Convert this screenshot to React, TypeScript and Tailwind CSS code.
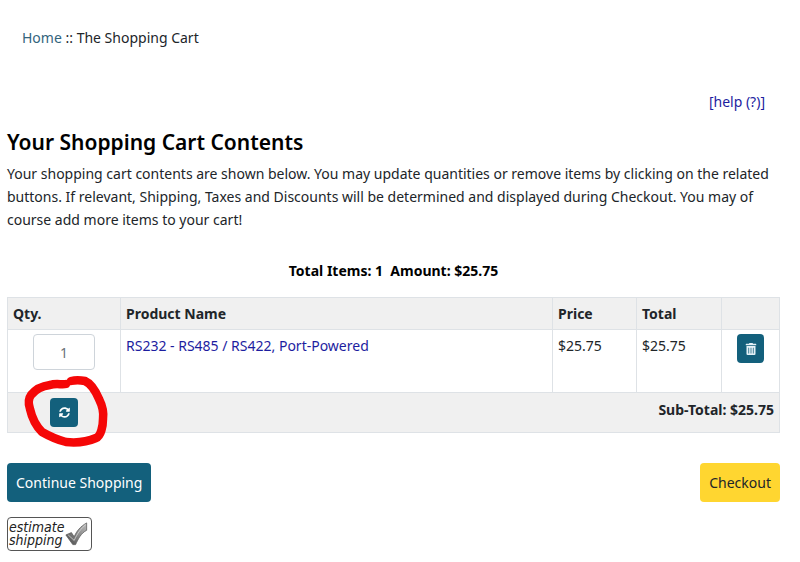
import { FaSyncAlt, FaTrashAlt } from "react-icons/fa";

const cell = "border border-[#dee2e6] px-[5px] align-top";

function EstimateShipping() {
  return (
    <button
      type="button"
      className="flex h-[34px] w-[85px] items-center justify-between rounded-[4px] border border-[#555] bg-white pr-[2px] pl-[1px] text-left text-[14px] text-[#222] italic font-['DejaVu_Sans_Condensed','DejaVu_Sans',sans-serif]"
    >
      <span className="flex w-[54px] flex-col">
        <span className="h-[13px] leading-[13px]">estimate</span>
        <span className="h-[13px] leading-[13px]">shipping</span>
      </span>
      <svg viewBox="0 0 26 26" className="h-[24px] w-[25px] shrink-0" aria-hidden="true">
        <defs>
          <linearGradient id="tick" x1="0" y1="1" x2="1" y2="0">
            <stop offset="0" stopColor="#444" />
            <stop offset="0.5" stopColor="#888" />
            <stop offset="1" stopColor="#bbb" />
          </linearGradient>
        </defs>
        <path d="M1.500 14 L7.500 11.500 L10.500 16 C13 10 17 5 24 1 L24 9 C18 12 15 18 12 24.500 L9 24.500 Z" fill="url(#tick)" stroke="#555" strokeWidth="0.800" />
        <path d="M4 14 L10.500 20 C14 12 18 7 23 3" fill="none" stroke="#ddd" strokeWidth="0.800" />
      </svg>
    </button>
  );
}

export default function App() {
  return (
    <main className="bg-white pr-5 pl-[7px] text-[14px] leading-[22px] text-[#212529] font-['Noto_Sans','Open_Sans',sans-serif]">
      <nav className="px-[15px] pt-[27px]" aria-label="Breadcrumb">
        <a href="#home" className="text-[#33647d]">Home</a> :: The Shopping Cart
      </nav>
      <div className="mt-[42px] pr-[15px] text-right">
        <a href="#help" className="text-[#1d1d9f]">[help (?)]</a>
      </div>
      <h1 className="mt-[15px] text-[21px] leading-[28px] font-semibold text-black">Your Shopping Cart Contents</h1>
      <p className="mt-[6px] leading-[23px]">
        Your shopping cart contents are shown below. You may update quantities or remove items by clicking on the related
        buttons. If relevant, Shipping, Taxes and Discounts will be determined and displayed during Checkout. You may of
        course add more items to your cart!
      </p>
      <p className="mt-[29px] text-center font-bold text-black">Total Items: 1 &nbsp;Amount: $25.75</p>
      <table className="mt-[15px] w-full table-fixed border-collapse">
        <colgroup>
          <col className="w-[113px]" />
          <col />
          <col className="w-[84px]" />
          <col className="w-[85px]" />
          <col className="w-[58px]" />
        </colgroup>
        <thead>
          <tr className="h-[32px] bg-[#f0f0f0] text-left">
            <th scope="col" className={cell + " pt-[5px]"}>Qty.</th>
            <th scope="col" className={cell + " pt-[5px]"}>Product Name</th>
            <th scope="col" className={cell + " pt-[5px]"}>Price</th>
            <th scope="col" className={cell + " pt-[5px]"}>Total</th>
            <td className={cell} />
          </tr>
        </thead>
        <tbody>
          <tr className="h-[63px]">
            <td className={cell + " pt-[4px]"}>
              <input
                type="text"
                aria-label="Quantity"
                defaultValue="1"
                className="mx-auto block h-[36px] w-[62px] rounded-[4px] border border-[#ced4da] text-center text-[#6b7278]"
              />
            </td>
            <td className={cell + " pt-[5px]"}>
              <a href="#product" className="text-[#1d1d9f]">RS232 - RS485 / RS422, Port-Powered</a>
            </td>
            <td className={cell + " pt-[5px]"}>$25.75</td>
            <td className={cell + " pt-[5px]"}>$25.75</td>
            <td className={cell + " pt-[4px]"}>
              <button type="button" aria-label="Delete item" className="mx-auto flex h-[29px] w-[27px] items-center justify-center rounded-[4px] bg-[#13607c] text-[#e4f1f7]">
                <FaTrashAlt size={12} />
              </button>
            </td>
          </tr>
        </tbody>
        <tfoot>
          <tr className="h-[40px] bg-[#f0f0f0]">
            <td className="border border-r-0 border-[#dee2e6] pt-[5px] align-top">
              <div className="relative mx-auto h-[29px] w-[28px]">
                <button type="button" aria-label="Update quantity" className="flex h-[29px] w-[28px] items-center justify-center rounded-[4px] bg-[#13607c] text-white">
                  <FaSyncAlt size={11} />
                </button>
                <svg viewBox="0 0 90 80" className="pointer-events-none absolute top-[-28px] left-[-30px] h-[80px] w-[90px] max-w-none" aria-hidden="true">
                  <path
                    d="M46 14 C42 15 36 13 30 15 C22 16 15 20 11 25 C8 29 8 33 10 39 C12 48 16 56 22 62 C29 66 38 70 46 72 C56 73 67 72 76 68 C81 66 83 56 83 49 C84 42 82 35 79 29 C76 22 72 14 65 11 C60 10 55 10 51 11"
                    fill="none"
                    stroke="#f50707"
                    strokeWidth="8.500"
                    strokeLinecap="round"
                    strokeLinejoin="round"
                  />
                </svg>
              </div>
            </td>
            <td colSpan={4} className="border border-l-0 border-[#dee2e6] px-[5px] pt-[6px] text-right align-top font-bold">
              Sub-Total: $25.75
            </td>
          </tr>
        </tfoot>
      </table>
      <div className="mt-[30px] flex items-center justify-between">
        <button type="button" className="h-[39px] rounded-[4px] bg-[#13607c] px-[9px] text-white">Continue Shopping</button>
        <button type="button" className="h-[39px] rounded-[4px] bg-[#ffd630] px-[9px]">Checkout</button>
      </div>
      <div className="mt-[15px]">
        <EstimateShipping />
      </div>
    </main>
  );
}
